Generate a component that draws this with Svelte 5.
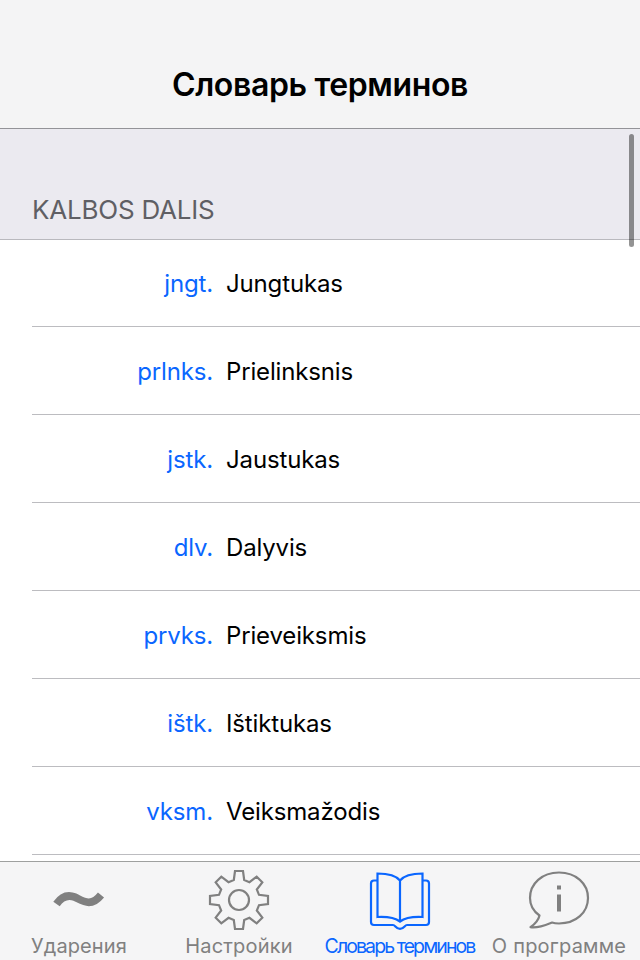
<script>
  const terms = [
    { abbr: 'jngt.', name: 'Jungtukas' },
    { abbr: 'prlnks.', name: 'Prielinksnis' },
    { abbr: 'jstk.', name: 'Jaustukas' },
    { abbr: 'dlv.', name: 'Dalyvis' },
    { abbr: 'prvks.', name: 'Prieveiksmis' },
    { abbr: 'ištk.', name: 'Ištiktukas' },
    { abbr: 'vksm.', name: 'Veiksmažodis' }
  ];

  const tabs = [
    { id: 'accent', label: 'Ударения' },
    { id: 'settings', label: 'Настройки' },
    { id: 'glossary', label: 'Словарь терминов' },
    { id: 'about', label: 'О программе' }
  ];
  const active = 'glossary';

  // One gear tooth, pointing up, repeated every 45 degrees.
  const tooth = [[-5.2, -20], [-4, -29], [4, -29], [5.2, -20]];
  const gear = Array.from({ length: 8 }, (_, i) => {
    const a = (i * Math.PI) / 4;
    return tooth
      .map(([x, y]) => [
        (39 + x * Math.cos(a) - y * Math.sin(a)).toFixed(2),
        (34 + x * Math.sin(a) + y * Math.cos(a)).toFixed(2)
      ].join(','))
      .join(' ');
  }).join(' ');
</script>

<div class="screen">
  <header><h1>Словарь терминов</h1></header>

  <main>
    <h2>KALBOS DALIS</h2>
    <ul>
      {#each terms as term}
        <li>
          <span class="abbr">{term.abbr}</span>
          <span class="name">{term.name}</span>
        </li>
      {/each}
    </ul>
    <div class="scrollbar"></div>
  </main>

  <nav>
    {#each tabs as tab}
      <div class="tab {tab.id}" class:active={tab.id === active}>
        <svg width="80" height="70" viewBox="0 0 80 70" fill="none" stroke="currentColor" stroke-width="2.2">
          {#if tab.id === 'accent'}
            <path d="M16.500 38C21 31.500 27 28 35 31.200C43 35 51 41.500 61 29" stroke-width="7.800" />
          {:else if tab.id === 'settings'}
            <polygon points={gear} />
            <circle cx="39" cy="34" r="10" />
          {:else if tab.id === 'glossary'}
            <path d="M40 14.500C36 9.500 28 7.500 17.500 7.500V51C28 50.500 36 52.500 40 55.500C44 52.500 52 50.500 62.500 51V7.500C52 7.500 44 9.500 40 14.500ZM40 14V56" />
            <path d="M17.500 14.500H14Q11 14.500 11 17.500V56Q11 59 14 59H33C35.500 59 35.500 62.800 40 62.800C44.500 62.800 44.500 59 47 59H66Q69 59 69 56V17.500Q69 14.500 66 14.500H62.500" />
          {:else}
            <path d="M19.500 49.500C13 45 10 39.500 10 32C10 17.500 22 6.500 39 6.500C56 6.500 68 17.500 68 32C68 46.500 56 57.500 39 57.500C36.500 57.500 34 57.200 32 56.500C27 58.500 18 62.500 10.500 61.200C15 58 18.500 54 19.500 49.500Z" stroke-linejoin="round" />
            <path d="M39 28.500V45.500M39 19.500V23.500" stroke-width="4" />
          {/if}
        </svg>
        <span>{tab.label}</span>
      </div>
    {/each}
  </nav>
</div>

<style>
  .screen {
    display: flex;
    flex-direction: column;
    width: 640px;
    height: 960px;
    overflow: hidden;
    background: #fff;
    font-family: Inter, "Liberation Sans", sans-serif;
  }

  header {
    flex: none;
    box-sizing: border-box;
    height: 129px;
    padding-top: 65px;
    border-bottom: 1px solid #939398;
    background: #f4f4f5;
    text-align: center;
  }

  h1 {
    margin: 0;
    font-size: 32px;
    line-height: 40px;
    font-weight: 600;
    letter-spacing: -0.37px;
    color: #000;
  }

  main {
    position: relative;
    flex: 1;
    min-height: 0;
    overflow: hidden;
  }

  h2 {
    box-sizing: border-box;
    height: 111px;
    margin: 0;
    padding: 65px 32px 0;
    border-bottom: 1px solid #b9b9be;
    background: #ebeaf0;
    color: #5f5f64;
    font-size: 26px;
    line-height: 32px;
    font-weight: 400;
    letter-spacing: -0.22px;
  }

  ul {
    margin: -1px 0 0 32px;
    padding: 0;
    list-style: none;
  }

  li {
    display: flex;
    align-items: center;
    gap: 13px;
    box-sizing: border-box;
    height: 88px;
    padding-top: 2px;
    border-bottom: 1px solid #bcbcc0;
    font-size: 24px;
    line-height: 30px;
    letter-spacing: -0.15px;
  }

  .abbr {
    width: 181px;
    text-align: right;
    color: #0a66ff;
  }

  .name {
    color: #000;
  }

  .scrollbar {
    position: absolute;
    top: 5px;
    right: 6px;
    width: 5px;
    height: 113px;
    border-radius: 3px;
    background: rgba(0, 0, 0, 0.42);
  }

  nav {
    display: flex;
    flex: none;
    box-sizing: border-box;
    height: 99px;
    border-top: 1px solid #9ea09f;
    background: #f5f5f6;
    color: #808080;
  }

  .tab {
    display: flex;
    flex: 1;
    flex-direction: column;
    align-items: center;
    min-width: 0;
    padding-top: 4px;
  }

  .tab svg {
    flex: none;
  }

  .tab span {
    margin: -2px 2px 0 0;
    font-size: 20px;
    line-height: 24px;
    letter-spacing: 0.2px;
    white-space: nowrap;
  }

  .tab.accent span {
    letter-spacing: 0.1px;
  }

  .tab.active {
    color: #0a66ff;
  }

  .tab.glossary span {
    margin-right: 0;
    margin-left: -1px;
    font-size: 19.5px;
    letter-spacing: -1.9px;
  }
</style>
